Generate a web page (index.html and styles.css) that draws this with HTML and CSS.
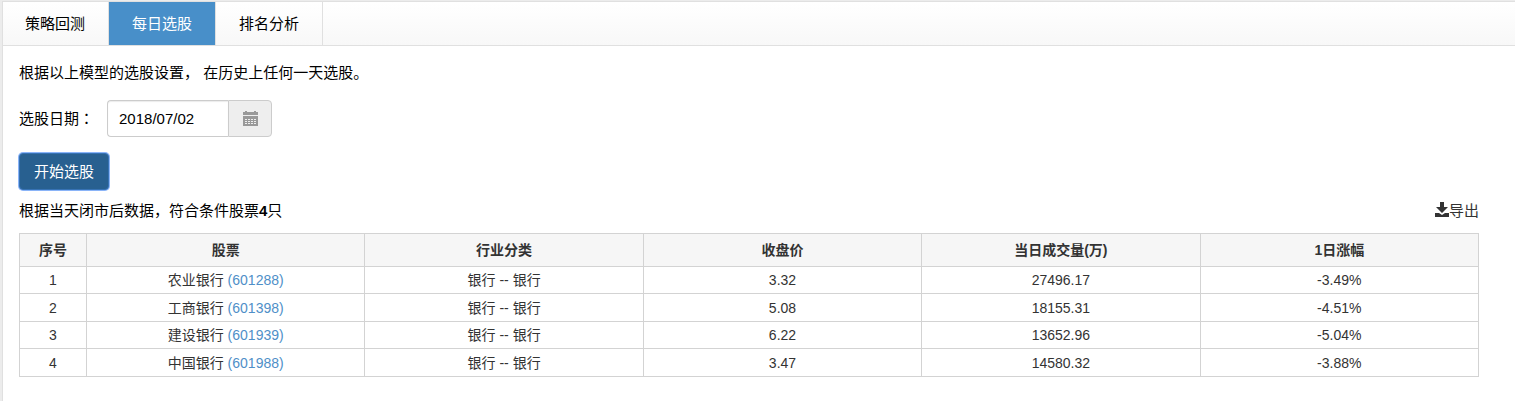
FILE: index.html
```html
<!DOCTYPE html>
<html lang="zh-CN">
<head>
  <meta charset="UTF-8">
  <meta name="viewport" content="width=device-width, initial-scale=1.0">
  <title>每日选股</title>
  <link rel="stylesheet" href="styles.css">
</head>
<body>
  <div class="panel">
    <!-- Tabs -->
    <nav class="tabs">
      <a class="tab" href="#backtest">策略回测</a>
      <a class="tab active" href="#daily">每日选股</a>
      <a class="tab" href="#ranking">排名分析</a>
    </nav>

    <main class="content">
      <p class="intro">根据以上模型的选股设置， 在历史上任何一天选股。</p>

      <form class="pick-form">
        <div class="date-row">
          <label for="pick-date">选股日期<span class="colon" lang="zh-TW">：</span></label>
          <div class="input-group">
            <input type="text" id="pick-date" class="date-input" value="2018/07/02">
            <button type="button" class="date-addon" aria-label="选择日期">
              <svg width="15" height="15" viewBox="0 0 15 15">
                <path fill="#999" d="M2 0h2v1h7V0h2v1h2v3H0V1h2zM0 5h15v10H0z"/>
                <path stroke="#eee" stroke-dasharray="2 1" d="M2 8.500h12M2 10.500h12M2 12.500h12"/>
              </svg>
            </button>
          </div>
        </div>
        <button type="button" class="btn-primary">开始选股</button>
      </form>

      <!-- Results -->
      <div class="summary">
        <span>根据当天闭市后数据，符合条件股票<b>4</b>只</span>
        <a class="export" href="#export">
          <svg width="14" height="18" viewBox="0 0 14 18">
            <path fill="#333" d="M5 0h4v5h4L7 11 1 5h4zM0 11h4l3 2 3-2h4v4H0z"/>
          </svg>导出</a>
      </div>

      <table class="stocks">
        <colgroup>
          <col class="col-index">
          <col span="5">
        </colgroup>
        <thead>
          <tr>
            <th>序号</th>
            <th>股票</th>
            <th>行业分类</th>
            <th>收盘价</th>
            <th>当日成交量(万)</th>
            <th>1日涨幅</th>
          </tr>
        </thead>
        <tbody>
          <tr>
            <td>1</td>
            <td>农业银行 <a href="#601288">(601288)</a></td>
            <td>银行 -- 银行</td>
            <td>3.32</td>
            <td>27496.17</td>
            <td>-3.49%</td>
          </tr>
          <tr>
            <td>2</td>
            <td>工商银行 <a href="#601398">(601398)</a></td>
            <td>银行 -- 银行</td>
            <td>5.08</td>
            <td>18155.31</td>
            <td>-4.51%</td>
          </tr>
          <tr>
            <td>3</td>
            <td>建设银行 <a href="#601939">(601939)</a></td>
            <td>银行 -- 银行</td>
            <td>6.22</td>
            <td>13652.96</td>
            <td>-5.04%</td>
          </tr>
          <tr>
            <td>4</td>
            <td>中国银行 <a href="#601988">(601988)</a></td>
            <td>银行 -- 银行</td>
            <td>3.47</td>
            <td>14580.32</td>
            <td>-3.88%</td>
          </tr>
        </tbody>
      </table>
    </main>
  </div>
</body>
</html>
```

FILE: styles.css
```css
* {
  box-sizing: border-box;
}

body {
  margin: 0;
  padding: 1px 0 0 2px;
  background: #ececec;
  font-family: "Liberation Sans", "Noto Sans CJK SC", sans-serif;
  font-size: 15px;
  line-height: 22px;
  color: #000;
}

a {
  color: #4f8fc8;
  text-decoration: none;
}

.panel {
  min-height: calc(100vh - 1px);
  background: #fff;
  border-top: 1px solid #e0e0e0;
  border-left: 1px solid #e0e0e0;
}

/* Tabs */
.tabs {
  display: flex;
  height: 44px;
  background: linear-gradient(to bottom, #fff, #f8f8f8);
  border-bottom: 1px solid #e0e0e0;
}

.tab {
  padding: 0 23px;
  line-height: 43px;
  color: #000;
  border-right: 1px solid #e0e0e0;
}

.tab:first-child {
  padding-left: 22px;
}

.tab.active {
  background: #488fc9;
  color: #fff;
}

/* Form */
.content {
  padding: 16px 36px 24px 16px;
}

.intro {
  margin: 0 0 16px;
}

.date-row {
  display: flex;
  align-items: center;
  gap: 13px;
  margin-bottom: 16px;
}

.colon {
  font-family: "Noto Sans CJK TC", sans-serif;
}

.input-group {
  display: flex;
  height: 37px;
}

.date-input {
  width: 121px;
  padding: 0 11px;
  border: 1px solid #ccc;
  border-right: 0;
  border-radius: 4px 0 0 4px;
  box-shadow: inset 0 1px 1px rgba(0, 0, 0, 0.08);
  font: inherit;
  color: #000;
}

.date-addon {
  display: flex;
  align-items: center;
  justify-content: center;
  width: 44px;
  padding: 0;
  background: #eee;
  border: 1px solid #ccc;
  border-radius: 0 4px 4px 0;
}

.btn-primary {
  display: block;
  height: 37px;
  padding: 0 14px;
  background: #286090;
  border: 1px solid #3672b4;
  border-radius: 4px;
  box-shadow: 0 0 0 1px #8ab4f8;
  font: inherit;
  color: #fff;
}

/* Results */
.summary {
  display: flex;
  justify-content: space-between;
  margin: 10px 0 11px;
}

.export {
  display: flex;
  align-items: center;
  color: #333;
}

.stocks {
  width: 100%;
  table-layout: fixed;
  border-collapse: collapse;
  font-size: 14px;
  line-height: 20px;
  text-align: center;
  color: #333;
}

.col-index {
  width: 67px;
}

.stocks th,
.stocks td {
  padding: 0;
  border: 1px solid #d3d3d3;
}

.stocks th {
  height: 33px;
  background: #f6f6f6;
}

.stocks td {
  height: 27px;
}

.stocks tr:nth-child(even) td {
  height: 28px;
}
```
